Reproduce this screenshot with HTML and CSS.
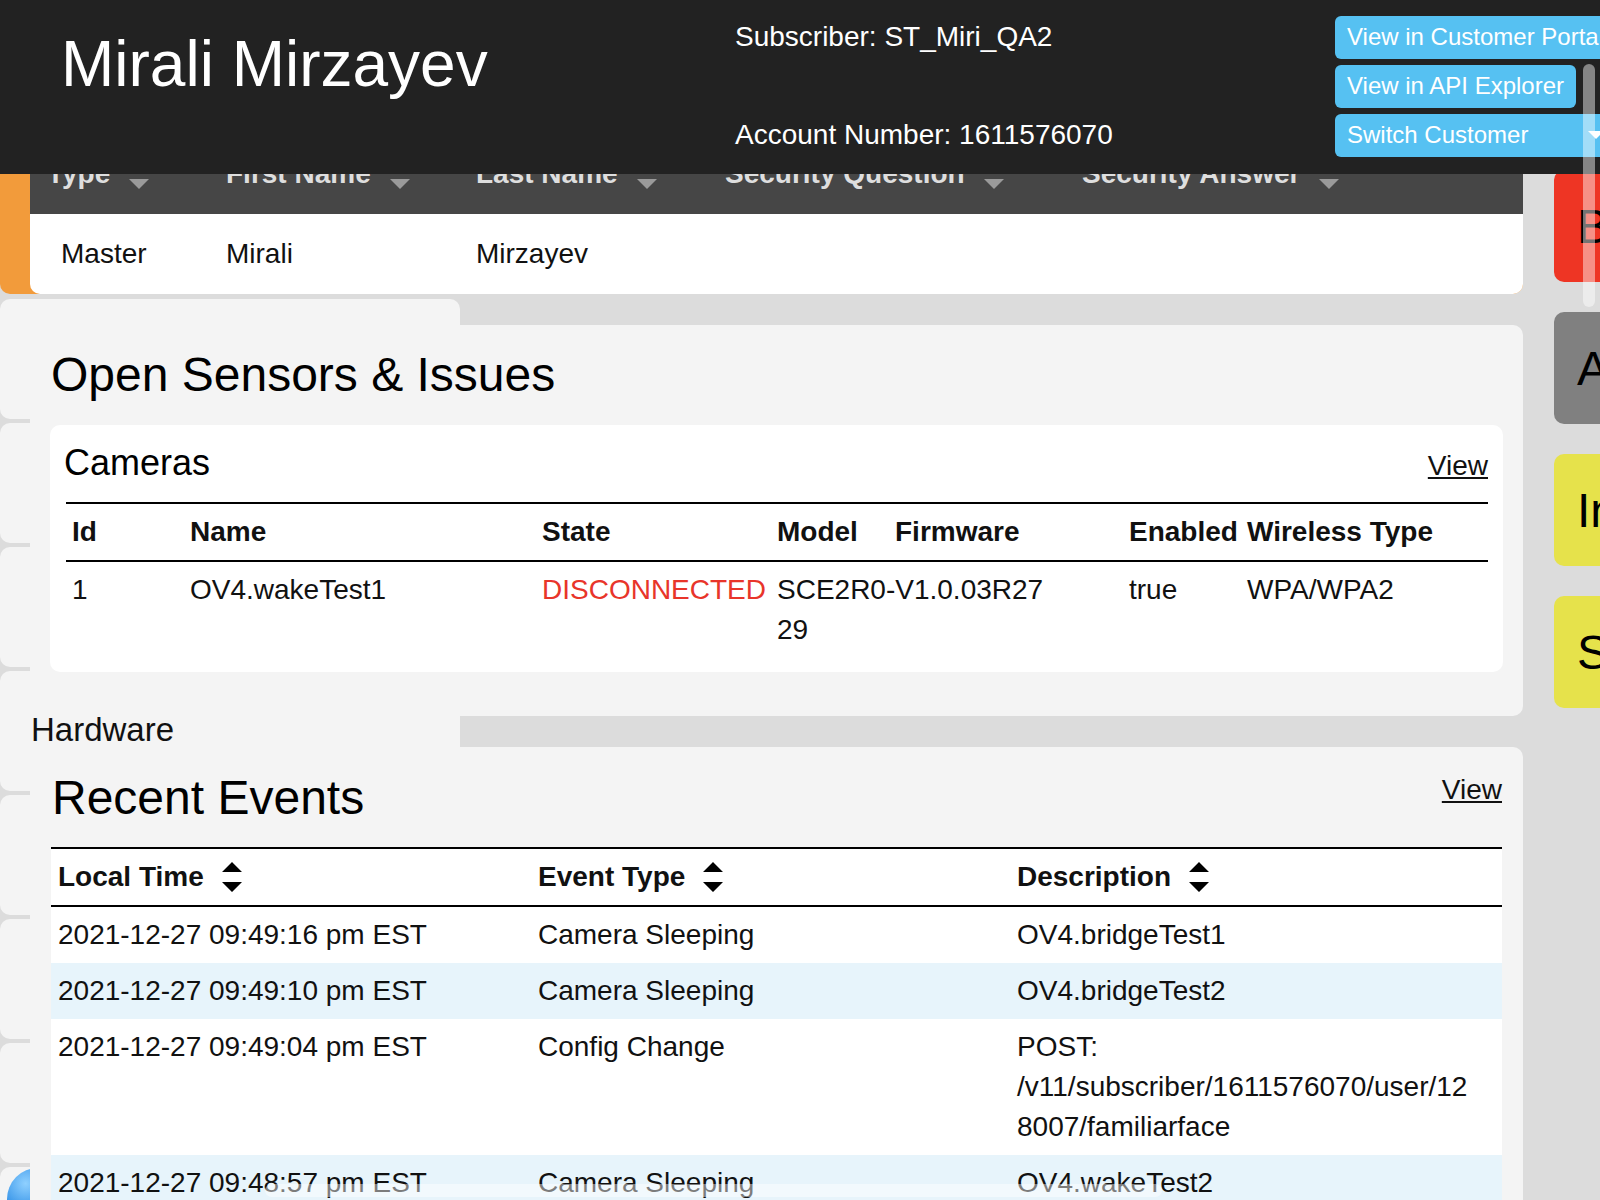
FILE: index.html
```html
<!DOCTYPE html>
<html lang="en">
<head>
<meta charset="utf-8">
<title>Mirali Mirzayev</title>
<link rel="stylesheet" href="styles.css">
</head>
<body>
<header class="topbar">
  <h1 class="cust-name">Mirali Mirzayev</h1>
  <div class="acct">
    <div class="acct-line">Subscriber: ST_Miri_QA2</div>
    <div class="acct-line">Account Number: 1611576070</div>
  </div>
  <div class="actions">
    <a class="btn" href="#">View in Customer Portal</a>
    <a class="btn" href="#">View in API Explorer</a>
    <a class="btn btn-dd" href="#"><span>Switch Customer</span><span class="caret"></span></a>
  </div>
</header>

<div class="page">
  <main class="main">
    <section class="user-card">
      <div class="user-inner">
        <table class="user-table">
          <colgroup>
            <col class="uc1"><col class="uc2"><col class="uc3"><col class="uc4"><col>
          </colgroup>
          <thead>
            <tr>
              <th>Type<span class="dd-tri"></span></th>
              <th>First Name<span class="dd-tri"></span></th>
              <th>Last Name<span class="dd-tri"></span></th>
              <th>Security Question<span class="dd-tri"></span></th>
              <th>Security Answer<span class="dd-tri"></span></th>
            </tr>
          </thead>
          <tbody>
            <tr>
              <td>Master</td>
              <td>Mirali</td>
              <td>Mirzayev</td>
              <td></td>
              <td></td>
            </tr>
          </tbody>
        </table>
      </div>
    </section>

    <div class="lower">
      <aside class="side">
        <div class="side-box"></div>
        <div class="side-box"></div>
        <div class="side-box"></div>
        <div class="side-box"><div class="side-title">Hardware</div></div>
        <div class="side-box"></div>
        <div class="side-box"></div>
        <div class="side-box"></div>
        <div class="side-box"><span class="side-orb"></span></div>
      </aside>

      <div class="panels">
        <section class="panel panel-sensors">
          <h2 class="panel-title">Open Sensors &amp; Issues</h2>
          <div class="card">
            <div class="card-head">
              <h3 class="card-title">Cameras</h3>
              <a class="view-link" href="#">View</a>
            </div>
            <table class="data-table cam-table">
              <colgroup>
                <col class="cc1"><col class="cc2"><col class="cc3"><col class="cc4"><col class="cc5"><col class="cc6"><col>
              </colgroup>
              <thead>
                <tr>
                  <th>Id</th>
                  <th>Name</th>
                  <th>State</th>
                  <th>Model</th>
                  <th>Firmware</th>
                  <th>Enabled</th>
                  <th>Wireless Type</th>
                </tr>
              </thead>
              <tbody>
                <tr>
                  <td>1</td>
                  <td>OV4.wakeTest1</td>
                  <td class="state-bad">DISCONNECTED</td>
                  <td><span class="model-val">SCE2R0-V1.0.03R2729</span></td>
                  <td></td>
                  <td>true</td>
                  <td>WPA/WPA2</td>
                </tr>
              </tbody>
            </table>
          </div>
        </section>

        <section class="panel panel-events">
          <div class="events-head">
            <h2 class="panel-title">Recent Events</h2>
            <a class="view-link" href="#">View</a>
          </div>
          <table class="data-table events-table">
            <colgroup>
              <col class="ec1"><col class="ec2"><col>
            </colgroup>
            <thead>
              <tr>
                <th>Local Time<svg class="sort-ico" viewBox="0 0 20 30" width="20" height="30"><path d="M0 10 L10 0 L20 10 Z M0 20 L20 20 L10 30 Z"/></svg></th>
                <th>Event Type<svg class="sort-ico" viewBox="0 0 20 30" width="20" height="30"><path d="M0 10 L10 0 L20 10 Z M0 20 L20 20 L10 30 Z"/></svg></th>
                <th>Description<svg class="sort-ico" viewBox="0 0 20 30" width="20" height="30"><path d="M0 10 L10 0 L20 10 Z M0 20 L20 20 L10 30 Z"/></svg></th>
              </tr>
            </thead>
            <tbody>
              <tr>
                <td>2021-12-27 09:49:16 pm EST</td>
                <td>Camera Sleeping</td>
                <td class="desc">OV4.bridgeTest1</td>
              </tr>
              <tr>
                <td>2021-12-27 09:49:10 pm EST</td>
                <td>Camera Sleeping</td>
                <td class="desc">OV4.bridgeTest2</td>
              </tr>
              <tr>
                <td>2021-12-27 09:49:04 pm EST</td>
                <td>Config Change</td>
                <td class="desc">POST: /v11/subscriber/1611576070/user/128007/familiarface</td>
              </tr>
              <tr>
                <td>2021-12-27 09:48:57 pm EST</td>
                <td>Camera Sleeping</td>
                <td class="desc">OV4.wakeTest2</td>
              </tr>
            </tbody>
          </table>
        </section>
      </div>
    </div>
  </main>

  <aside class="tiles">
    <div class="tile tile-red">Billing</div>
    <div class="tile tile-gray">Account</div>
    <div class="tile tile-yellow">Insights</div>
    <div class="tile tile-yellow">Sensors</div>
  </aside>
</div>

<div class="vscroll"></div>
<div class="hscroll"></div>
</body>
</html>
```

FILE: styles.css
```css
* { box-sizing: border-box; }

html, body {
  margin: 0;
  height: 100%;
  overflow: hidden;
}

body {
  font-family: "Liberation Sans", Arial, Helvetica, sans-serif;
  font-size: 28px;
  line-height: 40px;
  color: #111;
  background: #dcdcdc;
}

a { color: inherit; }

/* ---------- fixed top bar ---------- */
.topbar {
  position: fixed;
  top: 0;
  left: 0;
  width: 100%;
  height: 174px;
  background: #222;
  color: #fff;
  display: flex;
  align-items: flex-start;
  overflow: hidden;
  z-index: 10;
}

.cust-name {
  flex: none;
  width: 674px;
  margin: 0 0 0 61px;
  padding-top: 27px;
  font-size: 64px;
  line-height: 74px;
  font-weight: normal;
  white-space: nowrap;
}

.acct {
  flex: none;
  width: 600px;
  padding-top: 21px;
  line-height: 32px;
  white-space: nowrap;
}

.acct-line + .acct-line { margin-top: 66px; }

.actions {
  flex: none;
  padding-top: 16px;
  display: flex;
  flex-direction: column;
  align-items: flex-start;
}

.btn {
  display: flex;
  align-items: center;
  background: #56c1f2;
  color: #fff;
  font-size: 24px;
  line-height: 28px;
  padding: 7px 12px 8px;
  border-radius: 6px;
  margin-bottom: 6px;
  white-space: nowrap;
  text-decoration: none;
}

.btn-dd {
  align-self: stretch;
  justify-content: space-between;
}

.caret {
  width: 0;
  height: 0;
  border-left: 8px solid transparent;
  border-right: 8px solid transparent;
  border-top: 8px solid #fff;
}

/* ---------- page grid ---------- */
.page {
  display: grid;
  grid-template-columns: 1523px 220px;
  column-gap: 31px;
  padding-top: 134px;
  width: 1774px;
}

/* ---------- user card ---------- */
.user-card {
  background: #f29b3b;
  border-radius: 10px;
  padding-left: 30px;
  margin-bottom: 5px;
}

.user-inner {
  background: #fff;
  border-radius: 10px;
  overflow: hidden;
}

.user-table {
  width: 100%;
  border-collapse: collapse;
  table-layout: fixed;
}

.uc1 { width: 196px; }
.uc2 { width: 250px; }
.uc3 { width: 249px; }
.uc4 { width: 357px; }

.user-table th,
.user-table td {
  padding: 20px 0;
  text-align: left;
  white-space: nowrap;
}

.user-table th {
  background: #464646;
  color: #dedede;
  font-weight: bold;
}

.user-table th:first-child { padding-left: 17px; }
.user-table td:first-child { padding-left: 31px; }

.dd-tri {
  display: inline-block;
  width: 0;
  height: 0;
  margin-left: 19px;
  border-left: 10px solid transparent;
  border-right: 10px solid transparent;
  border-top: 10px solid #9a9a9a;
  vertical-align: -6px;
}

/* ---------- lower area ---------- */
.lower {
  display: grid;
  grid-template-columns: 30px 430px 1fr;
}

.side {
  grid-column: 1 / 3;
  grid-row: 1;
  display: flex;
  flex-direction: column;
  gap: 4px;
}

.side-box {
  height: 120px;
  flex: none;
  background: #f4f4f4;
  border-radius: 10px;
  overflow: hidden;
}

.side-title {
  padding: 40px 0 0 31px;
  font-size: 33px;
  line-height: 37px;
  color: #111;
}

.side-orb {
  display: block;
  width: 62px;
  height: 62px;
  margin: 1px 0 0 7px;
  border-radius: 50%;
  background: radial-gradient(circle at 30% 25%, #8fd0ff 0%, #2f8fe6 45%, #1763c4 100%);
}

.panels {
  grid-column: 2 / 4;
  grid-row: 1;
  padding-top: 26px;
  display: flex;
  flex-direction: column;
  gap: 31px;
  z-index: 1;
}

.panel {
  background: #f4f4f4;
  border-radius: 10px;
}

.panel-sensors { padding: 22px 20px 44px; }
.panel-sensors > .panel-title { margin-bottom: 23px; }
.panel-events { padding: 23px 21px 0; }

.panel-title {
  margin: 0 0 20px 1px;
  font-size: 48px;
  line-height: 55px;
  font-weight: normal;
  color: #000;
}

.card {
  background: #fff;
  border-radius: 10px;
  padding: 17px 15px 14px 16px;
}

.card-head {
  display: flex;
  justify-content: space-between;
  align-items: baseline;
  margin-bottom: 16px;
}

.card-title {
  margin: 0 0 0 -2px;
  font-size: 36px;
  line-height: 41px;
  font-weight: normal;
  color: #000;
}

.view-link {
  font-size: 28px;
  line-height: 40px;
  text-decoration: underline;
  color: #111;
}

.events-head {
  display: flex;
  justify-content: space-between;
  align-items: flex-start;
  margin-bottom: 22px;
}

.events-head .panel-title { margin-bottom: 0; }

/* ---------- data tables ---------- */
.data-table {
  width: 100%;
  border-collapse: collapse;
  table-layout: fixed;
  border-top: 2px solid #000;
}

.data-table th,
.data-table td {
  text-align: left;
  vertical-align: top;
  color: #111;
}

.data-table thead th {
  border-bottom: 2px solid #000;
  font-weight: bold;
  white-space: nowrap;
}

.cam-table th,
.cam-table td { padding: 8px 6px; }

.cc1 { width: 118px; }
.cc2 { width: 352px; }
.cc3 { width: 235px; }
.cc4 { width: 118px; }
.cc5 { width: 234px; }
.cc6 { width: 118px; }

.cam-table td { white-space: nowrap; }

.state-bad { color: #e8352a !important; }

.model-val {
  display: block;
  width: 272px;
  white-space: normal;
  word-break: break-all;
}

.events-table { background: #fff; }

.events-table th,
.events-table td { padding: 8px 7px; }

.ec1 { width: 480px; }
.ec2 { width: 479px; }

.events-table td.desc {
  padding-right: 20px;
  overflow-wrap: break-word;
}

.events-table tbody tr:nth-child(even) { background: #e7f4fb; }

.sort-ico {
  margin-left: 18px;
  vertical-align: -6px;
  fill: #000;
}

/* ---------- right tiles ---------- */
.tiles {
  padding-top: 36px;
  display: flex;
  flex-direction: column;
  gap: 30px;
}

.tile {
  height: 112px;
  border-radius: 10px;
  display: flex;
  align-items: center;
  padding-left: 23px;
  font-size: 48px;
  line-height: 55px;
  color: #000;
  white-space: nowrap;
  overflow: hidden;
}

.tile-red { background: #ee3524; }
.tile-gray { background: #808080; }
.tile-yellow { background: #e6e24b; }

/* ---------- overlay scrollbars ---------- */
.vscroll {
  position: fixed;
  left: 1583px;
  top: 64px;
  width: 12px;
  height: 243px;
  border-radius: 6px;
  background: rgba(255, 255, 255, 0.45);
  z-index: 20;
}

.hscroll {
  position: fixed;
  left: 265px;
  top: 1184px;
  width: 897px;
  height: 13px;
  border-radius: 7px;
  background: rgba(255, 255, 255, 0.45);
  z-index: 20;
}
```
